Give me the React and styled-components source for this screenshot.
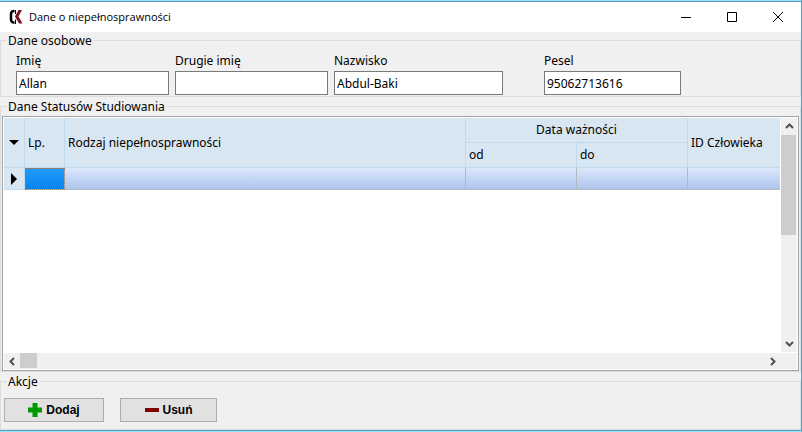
import React from "react";
import styled, { createGlobalStyle, css } from "styled-components";

const GlobalStyle = createGlobalStyle`
  *, *::before, *::after { box-sizing: border-box; }
  body {
    margin: 0;
    background: #f0f0f0;
    color: #000;
    font: 12px/16px "Noto Sans", Tahoma, sans-serif;
  }
  button, input { font: inherit; color: inherit; }
`;

const Window = styled.div`
  display: flex;
  flex-direction: column;
  min-height: 100vh;
  background: #f0f0f0;
  border: 1px solid #9fdcf4;
  border-right-color: #4ba3cf;
  border-left: 0;
  box-shadow: inset 0 -1px #4ba3cf;
`;

const TitleBar = styled.header`
  display: flex;
  align-items: center;
  height: 31px;
  padding-left: 8px;
  border-top: 1px solid #4d9fc8;
  background: #fff;
`;

const Title = styled.h1`
  flex: 1;
  margin: 0 0 0 5px;
  font: 11px/16px "Open Sans", "Segoe UI", sans-serif;
`;

const WindowButton = styled.button`
  display: grid;
  place-items: center;
  width: 46px;
  height: 30px;
  padding: 0;
  border: 0;
  background: transparent;
`;

const Group = styled.fieldset`
  display: flex;
  flex-direction: column;
  min-width: 0;
  margin: 0 0 1px;
  padding: 0;
  border: 1px solid #dcdcdc;
`;

const Legend = styled.legend`
  margin-left: 6px;
  padding: 0 2px 0 1px;
  line-height: 17px;
`;

const Fields = styled.div`
  display: flex;
  gap: 6px;
  padding: 4px 15px 1px;
`;

const Field = styled.div`
  display: flex;
  flex-direction: column;
  gap: 2px;
  width: ${(p) => p.$width}px;
  margin-left: ${(p) => (p.$apart ? "35px" : "0")};
`;

const TextInput = styled.input`
  width: 100%;
  height: 24px;
  padding: 0 2px;
  border: 1px solid #7a7a7a;
  border-radius: 0;
  background: #fff;
`;

const GridFrame = styled.div`
  display: grid;
  grid-template-columns: minmax(0, 1fr) 17px;
  grid-template-rows: minmax(0, 1fr) 16px;
  row-gap: 1px;
  min-height: 255px;
  margin: 1px 1px 0;
  padding: 1px;
  border: 1px solid #a0a4a8;
  background: #fff;
`;

const Table = styled.table`
  align-self: start;
  width: 100%;
  table-layout: fixed;
  border-collapse: separate;
  border-spacing: 0;
`;

const Col = styled.col`
  width: ${(p) => (p.$width ? `${p.$width}px` : "auto")};
`;

const HeadCell = styled.th`
  height: 25px;
  padding: 0 3px;
  border-right: ${(p) => (p.$last ? "0" : "1px solid #bfd9ee")};
  border-bottom: 1px solid #bfd9ee;
  background: #d8e6f1;
  font-weight: normal;
  text-align: ${(p) => (p.$center ? "center" : "left")};
`;

const Marker = styled.div`
  display: grid;
  place-items: center;
`;

const Cell = styled.td`
  height: 22px;
  padding: 0;
  border-right: ${(p) => (p.$last ? "0" : "1px solid #b0b8c4")};
  border-bottom: 1px solid #b4bccb;
  background: linear-gradient(#dce7fb, #adc5ec);
  ${(p) =>
    p.$selected &&
    css`
      background: linear-gradient(#219bfb, #0683ee);
      outline: 1px dotted #8a8070;
      outline-offset: -1px;
    `}
`;

const RowHead = styled.th`
  padding: 0;
  border-right: 1px solid #bfd9ee;
  border-bottom: 1px solid #bfd9ee;
  background: #d8e6f1;
`;

const ScrollBar = styled.div`
  display: flex;
  flex-direction: ${(p) => (p.$vertical ? "column" : "row")};
  background: #f0f0f0;
  ${(p) => p.$vertical && css`border-left: 1px solid #fff;`}
`;

const ScrollArrow = styled.button`
  display: grid;
  place-items: center;
  flex: none;
  width: 16px;
  height: 17px;
  padding: 0;
  border: 0;
  background: transparent;
`;

const Thumb = styled.div`
  flex: none;
  width: ${(p) => (p.$vertical ? "15px" : "17px")};
  height: ${(p) => (p.$vertical ? "100px" : "15px")};
  background: #cdcdcd;
`;

const Track = styled.div`
  flex: 1;
`;

const Corner = styled.div`
  background: #f0f0f0;
`;

const Actions = styled.div`
  display: flex;
  gap: 16px;
  padding: 8px 3px 7px;
`;

const ActionButton = styled.button`
  display: flex;
  align-items: center;
  justify-content: center;
  gap: 4px;
  width: ${(p) => p.$width}px;
  height: 24px;
  padding: 0;
  border: 1px solid #adadad;
  background: #e1e1e1;
  font: bold 12px/16px "Liberation Sans", Arial, sans-serif;
`;

const arrows = {
  up: "M1 6 L4.5 2.5 L8 6",
  down: "M1 3 L4.5 6.5 L8 3",
  left: "M6 1 L2.5 4.5 L6 8",
  right: "M3 1 L6.5 4.5 L3 8",
};

function Arrow({ direction, label }) {
  return (
    <ScrollArrow type="button" aria-label={label}>
      <svg width="9" height="9" viewBox="0 0 9 9" fill="none" stroke="#505050" strokeWidth="2">
        <path d={arrows[direction]} />
      </svg>
    </ScrollArrow>
  );
}

function Logo() {
  return (
    <svg width="16" height="16" viewBox="0 0 16 16" fill="none" aria-hidden="true">
      <path d="M6.500 2H5.500Q3 2.500 3 5V10.500Q3 13 5.500 13.500H6.500" stroke="#000" strokeWidth="2.500" />
      <path d="M7.500 1V5M7.500 10.500V15" stroke="#000" strokeWidth="1" />
      <path d="M10.500 1H14L10.500 7.500L14.500 14.500H11L7 7.500Z" fill="#7c1620" />
    </svg>
  );
}

const fields = [
  { id: "imie", label: "Imię", value: "Allan", width: 153 },
  { id: "drugie", label: "Drugie imię", value: "", width: 153 },
  { id: "nazwisko", label: "Nazwisko", value: "Abdul-Baki", width: 169 },
  { id: "pesel", label: "Pesel", value: "95062713616", width: 137, apart: true },
];

export default function App() {
  return (
    <>
      <GlobalStyle />
      <Window>
        <TitleBar>
          <Logo />
          <Title>Dane o niepełnosprawności</Title>
          <WindowButton type="button" aria-label="Minimalizuj">
            <svg width="12" height="12" stroke="#000"><path d="M1 6.500H11" /></svg>
          </WindowButton>
          <WindowButton type="button" aria-label="Maksymalizuj">
            <svg width="12" height="12" fill="none" stroke="#000"><path d="M1.500 1.500H10.500V10.500H1.500Z" /></svg>
          </WindowButton>
          <WindowButton type="button" aria-label="Zamknij">
            <svg width="12" height="12" stroke="#000"><path d="M1 1L11 11M11 1L1 11" /></svg>
          </WindowButton>
        </TitleBar>

        <Group>
          <Legend>Dane osobowe</Legend>
          <Fields>
            {fields.map((f) => (
              <Field key={f.id} $width={f.width} $apart={f.apart}>
                <label htmlFor={f.id}>{f.label}</label>
                <TextInput id={f.id} type="text" defaultValue={f.value} />
              </Field>
            ))}
          </Fields>
        </Group>

        <Group>
          <Legend>Dane Statusów Studiowania</Legend>
          <GridFrame>
            <Table>
              <colgroup>
                <Col $width={21} />
                <Col $width={40} />
                <Col />
                <Col $width={111} />
                <Col $width={111} />
                <Col $width={92} />
              </colgroup>
              <thead>
                <tr>
                  <HeadCell rowSpan={2}>
                    <Marker>
                      <svg width="10" height="5"><path d="M0 0H10L5 5Z" /></svg>
                    </Marker>
                  </HeadCell>
                  <HeadCell rowSpan={2}>Lp.</HeadCell>
                  <HeadCell rowSpan={2}>Rodzaj niepełnosprawności</HeadCell>
                  <HeadCell colSpan={2} $center>Data ważności</HeadCell>
                  <HeadCell rowSpan={2} $last>ID Człowieka</HeadCell>
                </tr>
                <tr>
                  <HeadCell>od</HeadCell>
                  <HeadCell>do</HeadCell>
                </tr>
              </thead>
              <tbody>
                <tr>
                  <RowHead scope="row">
                    <Marker>
                      <svg width="6" height="12"><path d="M0 0L6 6L0 12Z" /></svg>
                    </Marker>
                  </RowHead>
                  <Cell $selected />
                  <Cell />
                  <Cell />
                  <Cell />
                  <Cell $last />
                </tr>
              </tbody>
            </Table>
            <ScrollBar $vertical>
              <Arrow direction="up" label="Przewiń w górę" />
              <Thumb $vertical />
              <Track />
              <Arrow direction="down" label="Przewiń w dół" />
            </ScrollBar>
            <ScrollBar>
              <Arrow direction="left" label="Przewiń w lewo" />
              <Thumb />
              <Track />
              <Arrow direction="right" label="Przewiń w prawo" />
            </ScrollBar>
            <Corner />
          </GridFrame>
        </Group>

        <Group>
          <Legend>Akcje</Legend>
          <Actions>
            <ActionButton type="button" $width={100}>
              <svg width="14" height="14" fill="#009a00" aria-hidden="true">
                <path d="M4.500 0H9.500V4.500H14V9.500H9.500V14H4.500V9.500H0V4.500H4.500Z" />
              </svg>
              Dodaj
            </ActionButton>
            <ActionButton type="button" $width={97}>
              <svg width="14" height="14" fill="#800000" aria-hidden="true">
                <path d="M0 5H14V9H0Z" />
              </svg>
              Usuń
            </ActionButton>
          </Actions>
        </Group>
      </Window>
    </>
  );
}
